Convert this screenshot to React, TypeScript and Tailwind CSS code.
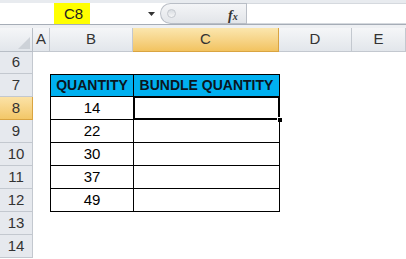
import React from "react";

const font = { fontFamily: '"Liberation Sans", Arial, sans-serif' };

const cols = [
  { key: "A", w: 17 },
  { key: "B", w: 83 },
  { key: "C", w: 146 },
  { key: "D", w: 73 },
  { key: "E", w: 54 },
];

const rows: { n: number; h: number }[] = [
  { n: 6, h: 22 },
  { n: 7, h: 23 },
  { n: 8, h: 23 },
  { n: 9, h: 23 },
  { n: 10, h: 23 },
  { n: 11, h: 23 },
  { n: 12, h: 23 },
  { n: 13, h: 23 },
  { n: 14, h: 23 },
];

const data: Record<number, string> = { 8: "14", 9: "22", 10: "30", 11: "37", 12: "49" };

export default function App() {
  return (
    <div className="w-[406px] h-[259px] overflow-hidden bg-white relative" style={font}>
      {/* formula bar */}
      <div className="h-[3px] bg-[#e8ebef]" />
      <div className="flex h-[21px]">
        <div className="w-[160px] bg-white flex items-stretch">
          <div className="w-[54px]" />
          <div className="w-[36px] bg-[#ffff00] text-[15px] leading-[21px] text-[#222] pl-[10px]">C8</div>
          <div className="flex-1 flex items-center justify-end pr-[5px]">
            <svg width="7" height="4" viewBox="0 0 7 4">
              <path d="M0 0 H7 L3.5 4 Z" fill="#333" />
            </svg>
          </div>
        </div>
        <div className="w-[86px] rounded-l-[11px] bg-gradient-to-b from-[#f4f5f7] to-[#e2e5e9] border-l border-y border-[#b9bec6] flex items-center relative">
          <div className="ml-[6px] w-[9px] h-[9px] rounded-full bg-gradient-to-b from-[#d8dce1] to-[#f6f7f8] border border-[#c4c8ce]" />
          <span
            className="absolute left-[67px] top-[1px] text-[14px] italic font-bold text-[#333]"
            style={{ fontFamily: '"Liberation Serif", serif' }}
          >
            f<span className="text-[10px]">x</span>
          </span>
        </div>
        <div className="w-[1px] bg-[#b9bec6]" />
        <div className="flex-1 bg-white border-y border-[#d5d9de]" />
      </div>
      <div className="h-[1px] bg-[#a6adb7]" />
      <div className="h-[3px] bg-[#eef0f3]" />

      {/* column header row */}
      <div className="flex h-[24px]">
        <div className="w-[33px] bg-gradient-to-b from-[#f5f6f8] to-[#e2e6eb] border-r border-b border-[#b8bec6] relative">
          <svg className="absolute right-[2px] bottom-[2px]" width="12" height="12" viewBox="0 0 12 12">
            <path d="M12 0 V12 H0 Z" fill="#cdd2d8" />
          </svg>
        </div>
        {cols.map((c) => (
          <div
            key={c.key}
            style={{ width: c.w }}
            className={
              "shrink-0 flex items-center justify-center text-[15px] border-r border-b " +
              (c.key === "C"
                ? "bg-gradient-to-b from-[#fbe6ae] to-[#f2c35f] border-[#d9a441] text-[#333]"
                : "bg-gradient-to-b from-[#f5f6f8] to-[#e2e6eb] border-[#c3c8cf] text-[#333]")
            }
          >
            {c.key}
          </div>
        ))}
      </div>

      {/* rows */}
      {rows.map((r) => (
        <div key={r.n} className="flex" style={{ height: r.h }}>
          <div
            className={
              "w-[33px] shrink-0 flex items-center justify-center text-[15px] text-[#333] border-r border-b " +
              (r.n === 8
                ? "bg-gradient-to-b from-[#fbe2a6] to-[#f3c767] border-[#d9a441]"
                : "bg-[#e6e9ee] border-[#c3c8cf]")
            }
          >
            {r.n}
          </div>
          <div className="w-[17px] shrink-0" />
          {r.n >= 7 && r.n <= 12 ? (
            <>
              <div
                className={
                  "w-[83px] shrink-0 flex items-center justify-center border-l border-b border-black " +
                  (r.n === 7
                    ? "bg-[#00b0f0] border-t font-bold text-[14px] text-[#0b1520]"
                    : "text-[15px] text-black")
                }
              >
                {r.n === 7 ? "QUANTITY" : data[r.n]}
              </div>
              <div
                className={
                  "w-[147px] shrink-0 flex items-center justify-center border-l border-r border-b border-black relative " +
                  (r.n === 7 ? "bg-[#00b0f0] border-t font-bold text-[14px] text-[#0b1520]" : "")
                }
              >
                {r.n === 7 ? "BUNDLE QUANTITY" : ""}
                {r.n === 8 && (
                  <>
                    <div className="absolute -left-[1px] -top-[1px] -right-[1px] -bottom-[1px] border-2 border-black" />
                    <div className="absolute -right-[4px] -bottom-[4px] w-[6px] h-[6px] bg-black border border-white" />
                  </>
                )}
              </div>
            </>
          ) : null}
        </div>
      ))}
    </div>
  );
}
